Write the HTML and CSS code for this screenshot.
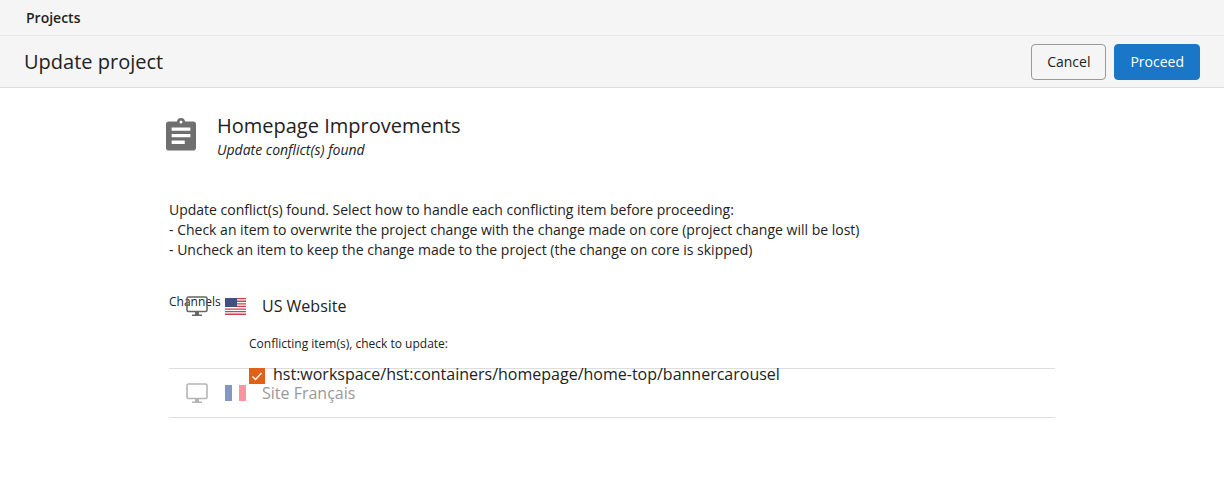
FILE: index.html
```html
<!DOCTYPE html>
<html lang="en">
<head>
    <meta charset="UTF-8">
    <title>Update project</title>
    <link rel="stylesheet" href="styles.css">
</head>
<body>
    <div class="top-bar">Projects</div>
    <div class="toolbar">
        <h1>Update project</h1>
        <div class="actions">
            <button class="btn btn-cancel">Cancel</button>
            <button class="btn btn-primary">Proceed</button>
        </div>
    </div>

    <div class="content">
        <div class="project-head">
            <svg class="project-icon" width="30" height="33" viewBox="0 0 32 34">
                <path fill="#6f6f6f" fill-rule="evenodd" d="M3 3h8.600a4.500 4.500 0 0 1 8.800 0H29a3 3 0 0 1 3 3v25a3 3 0 0 1-3 3H3a3 3 0 0 1-3-3V6a3 3 0 0 1 3-3zM16 2a1.600 1.600 0 1 0 0 3.200A1.600 1.600 0 0 0 16 2zM6 9.500V13h20V9.500zM6 16.500V20h20v-3.500zM6 23.500V27h14v-3.500z"/>
            </svg>
            <div>
                <div class="project-name">Homepage Improvements</div>
                <div class="project-status">Update conflict(s) found</div>
            </div>
        </div>

        <p class="message">Update conflict(s) found. Select how to handle each conflicting item before proceeding:<br>
        - Check an item to overwrite the project change with the change made on core (project change will be lost)<br>
        - Uncheck an item to keep the change made to the project (the change on core is skipped)</p>

        <div class="channels-label">Channels</div>

        <div class="channel channel-open">
            <div class="channel-head">
                <svg class="monitor" width="22" height="20" viewBox="0 0 22 20">
                    <rect x="1" y="1" width="20" height="14.500" rx="1.500" fill="none" stroke="#666" stroke-width="1.600"/>
                    <path fill="#666" d="M9 16h4v2.500h3V20H6v-1.500h3z"/>
                </svg>
                <svg class="flag" width="21" height="17" viewBox="0 0 21 17">
                    <rect width="21" height="17" fill="#fff"/>
                    <path fill="#c8414b" d="M0 0h21v1.300H0zM0 2.600h21v1.300H0zM0 5.200h21v1.300H0zM0 7.800h21v1.300H0zM0 10.400h21v1.300H0zM0 13h21v1.300H0zM0 15.600h21V17H0z"/>
                    <rect width="12" height="9" fill="#41507f"/>
                </svg>
                <span class="channel-name">US Website</span>
            </div>
            <div class="conflicts">
                <div class="conflicts-title">Conflicting item(s), check to update:</div>
            </div>
        </div>

        <div class="channel channel-muted">
            <label class="conflict-item">
                <span class="checkbox">
                    <svg width="16" height="16" viewBox="0 0 16 16"><path d="M3.500 8.500l3 3 6-6.500" fill="none" stroke="#fff" stroke-width="1.300"/></svg>
                </span>
                hst:workspace/hst:containers/homepage/home-top/bannercarousel
            </label>
            <div class="channel-head">
                <svg class="monitor" width="22" height="20" viewBox="0 0 22 20">
                    <rect x="1" y="1" width="20" height="14.500" rx="1.500" fill="none" stroke="#b5b5b5" stroke-width="1.600"/>
                    <path fill="#b5b5b5" d="M9 16h4v2.500h3V20H6v-1.500h3z"/>
                </svg>
                <svg class="flag" width="21" height="16" viewBox="0 0 21 16">
                    <rect width="7" height="16" fill="#8497c0"/>
                    <rect x="14" width="7" height="16" fill="#f895a0"/>
                </svg>
                <span class="channel-name">Site Français</span>
            </div>
        </div>
    </div>
</body>
</html>
```

FILE: styles.css
```css
body {
    margin: 0;
    font-family: "Open Sans", sans-serif;
    font-size: 14px;
    color: #222;
    background-color: #fff;
}

.top-bar {
    height: 35px;
    line-height: 35px;
    padding-left: 26px;
    font-size: 14px;
    font-weight: 600;
    background-color: #f5f5f5;
    border-bottom: 1px solid #e6e6e6;
}

.toolbar {
    display: flex;
    justify-content: space-between;
    align-items: center;
    height: 51px;
    padding: 0 24px;
    background-color: #f5f5f5;
    border-bottom: 1px solid #ddd;
}

.toolbar h1 {
    margin: 0;
    font-size: 20px;
    font-weight: 400;
}

.actions {
    display: flex;
    gap: 8px;
}

.btn {
    height: 36px;
    padding: 0 15px;
    font-family: inherit;
    font-size: 14px;
    border-radius: 4px;
}

.btn-cancel {
    color: #222;
    background-color: #f5f5f5;
    border: 1px solid #999;
}

.btn-primary {
    font-weight: 500;
    color: #fff;
    background-color: #1a76c6;
    border: 1px solid #1a76c6;
}

.content {
    width: 886px;
    margin-left: 169px;
}

.project-head {
    display: flex;
    align-items: center;
    gap: 21px;
    height: 48px;
    padding-top: 24px;
}

.project-icon {
    margin: -3px 0 0 -3px;
}

.project-name {
    font-size: 20px;
    line-height: 28px;
}

.project-status {
    font-size: 14px;
    font-style: italic;
    line-height: 20px;
}

.message {
    margin: 40px 0 0;
    line-height: 20px;
}

.channels-label {
    height: 0;
    margin-top: 22px;
    font-size: 12px;
    line-height: 40px;
}

.channel {
    position: relative;
    border-bottom: 1px solid #ddd;
}

.channel-open {
    height: 86px;
}

.channel-head {
    display: flex;
    align-items: center;
    height: 48px;
    padding-left: 17px;
}

.monitor {
    margin-right: 17px;
}

.flag {
    margin-right: 16px;
}

.channel-name {
    font-size: 16px;
}

.channel-muted .channel-name {
    color: #999;
}

.conflicts {
    padding-left: 80px;
}

.conflicts-title {
    font-size: 12px;
    line-height: 17px;
    margin-top: 5px;
}

/* overflows out of the row above, sits on top of the next channel */
.conflict-item {
    position: absolute;
    top: -1px;
    left: 80px;
    display: flex;
    gap: 8px;
    font-size: 16px;
    line-height: 13px;
}

.checkbox {
    width: 16px;
    height: 16px;
    background-color: #e2601a;
}

.checkbox svg {
    display: block;
}
```
